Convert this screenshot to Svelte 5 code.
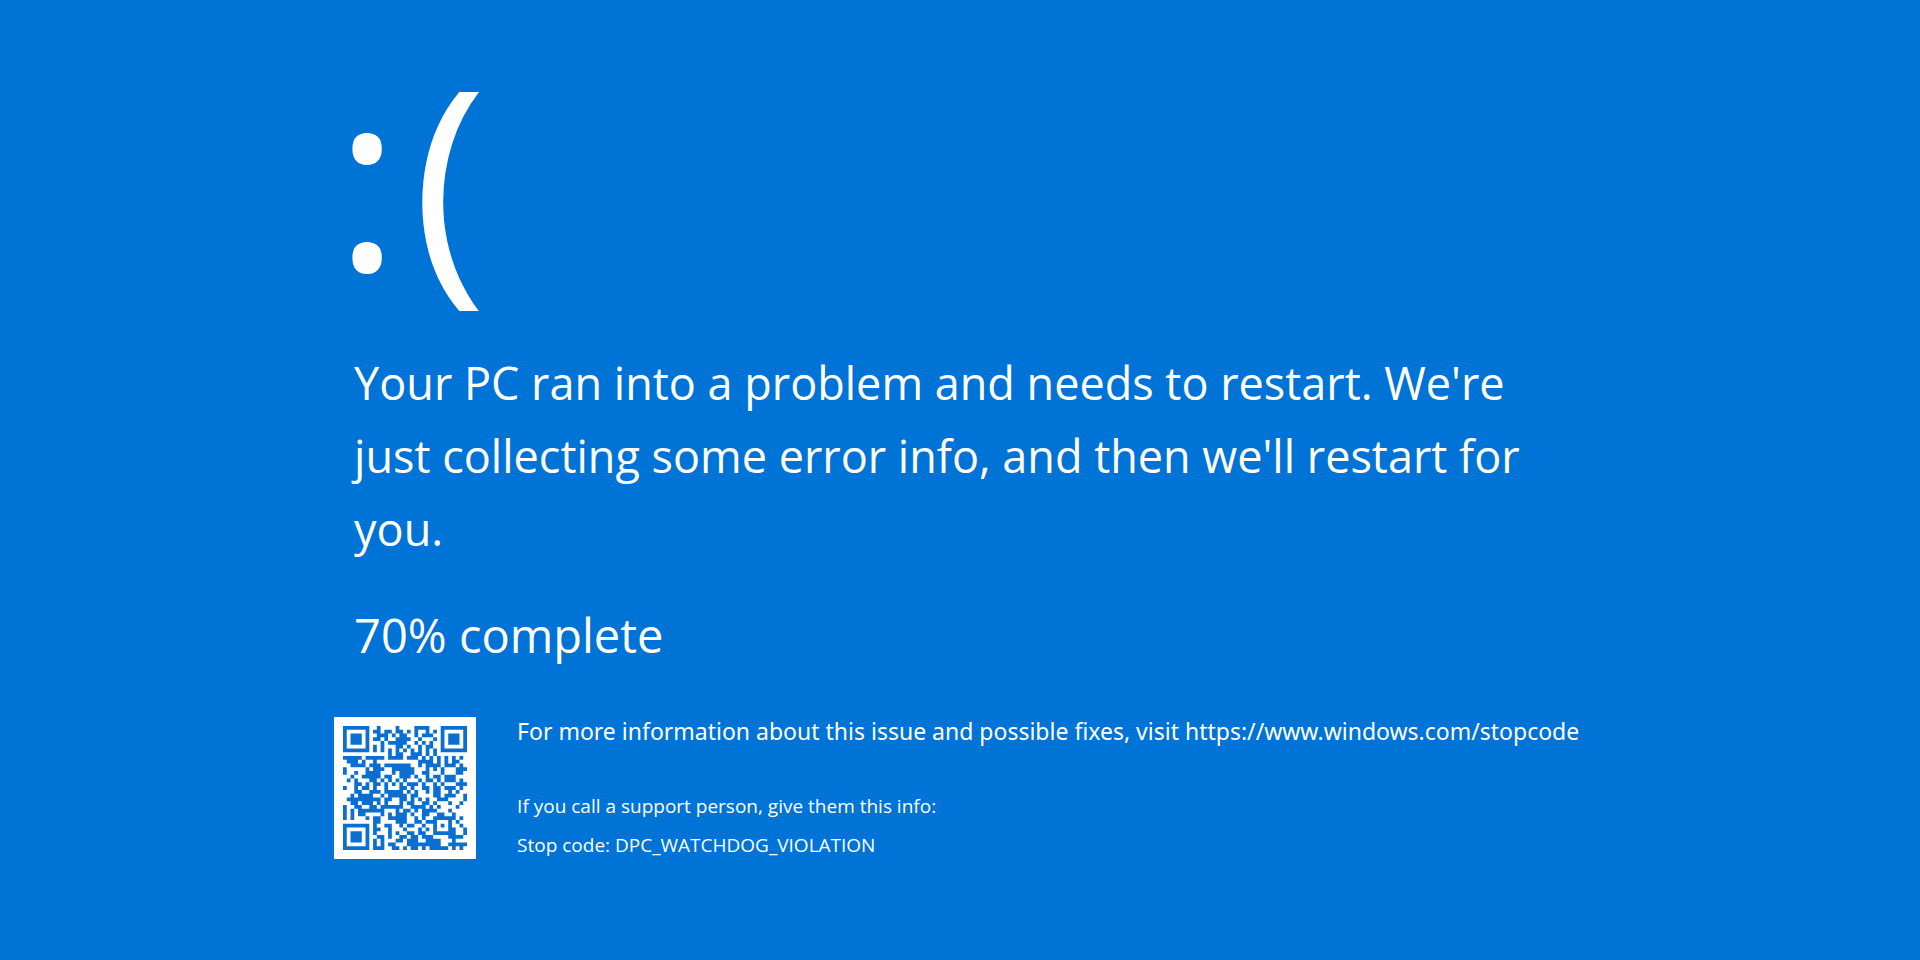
<script>
  const percent = 70;
  const stopCode = 'DPC_WATCHDOG_VIOLATION';

  const qr = [
    '#######..#....#....####...#######',
    '#.....#.##.##.##.#.#..#.#.#.....#',
    '#.###.#..###.#.##..#.###..#.###.#',
    '#.###.#.##.#..####..#...#.#.###.#',
    '#.###.#...#.#####..#.#.#..#.###.#',
    '#.....#.#.#...##.#..#.##..#.....#',
    '#######.#.#.#.#.#.#.#.#.#.#######',
    '............#.##..###.#.#........',
    '#####.#####.####.###.#.#.#.#.#.#.',
    '.###.#..#...........####.#.#.##..',
    '..####.###.#######..#.####.###.#.',
    '#.....#.###..######...#.#.#...###',
    '#..#..####...#.####..##...#...##.',
    '..#..#####.##..###.#..#.##.###...',
    '.#.#...##.#.#.#.#...#.##.#.###.#.',
    '...##.#.##.#.#.#.###.#..#.#...###',
    '#..#.##.#..#...##.#..##.##.###.#.',
    '...##..###.#####.#.#..#.##..#.#..',
    '..#.####..#.#####.##....##.###..#',
    '.#########.##..##.#.#.#..###....#',
    '..##.###.#.#...#.##..##.#...#..#.',
    '#..##..##.######..####.#.#....#..',
    '#.#.#######...#.##.#.####...#....',
    '#.#.##....#.#.###.#..##..##..#...',
    '#.#...#.##..#####..#.#..######.#.',
    '........##....###..##.###...#.#..',
    '#######.#..##..#.##..#..#.#.#..#.',
    '#.....#.##..#...#...#.#.#...##..#',
    '#.###.#.#...#.#..##.##..######..#',
    '#.###.#..##.#..##.##.###....####.',
    '#.###.#.#.#...##.###..####...#...',
    '#.....#.#.#.##...#########..#####',
    '#######.###..##.#.##.#.#####.#.#.',
  ];

  const qrPath = qr
    .flatMap((row, y) => [...row].map((cell, x) => (cell === '#' ? `M${x} ${y}h1v1h-1z` : '')))
    .join('');
</script>

<main class="screen">
  <h1 class="face"><span>:</span><span>(</span></h1>

  <div class="message">
    <p>
      Your PC ran into a problem and needs to restart. We're just collecting
      some error info, and then we'll restart for you.
    </p>
    <p class="progress">{percent}% complete</p>
  </div>

  <section class="details">
    <svg class="qr" viewBox="0 0 33 33" role="img" aria-label="QR code">
      <path d={qrPath} fill="currentColor" />
    </svg>
    <div class="info">
      <p class="more">
        For more information about this issue and possible fixes, visit
        <a href="https://www.windows.com/stopcode">https://www.windows.com/stopcode</a>
      </p>
      <div class="support">
        <p>If you call a support person, give them this info:</p>
        <p>Stop code: {stopCode}</p>
      </div>
    </div>
  </section>
</main>

<style>
  :global(body) {
    margin: 0;
    background: #0073d7;
  }
  .screen {
    box-sizing: border-box;
    min-height: 100vh;
    padding: 44px 16% 72px 17.4%;
    background: #0073d7;
    color: #fff;
    font-family: 'Open Sans', 'Noto Sans', sans-serif;
  }
  p,
  h1 {
    margin: 0;
  }
  .face {
    display: flex;
    gap: 12px;
    font-size: 252px;
    line-height: 260px;
    font-weight: 400;
  }
  .message {
    display: flex;
    flex-direction: column;
    gap: 34px;
    max-width: 1200px;
    margin-top: 42px;
    padding-left: 20px;
    font-size: 45px;
    line-height: 73px;
  }
  .progress {
    font-size: 47px;
  }
  .details {
    display: flex;
    gap: 41px;
    margin-top: 45px;
  }
  .qr {
    flex: none;
    box-sizing: border-box;
    width: 142px;
    height: 142px;
    padding: 9px;
    background: #fff;
    color: #0a6fd0;
  }
  .info {
    display: flex;
    flex-direction: column;
    gap: 42px;
  }
  .more {
    font-family: 'Noto Sans', 'Open Sans', sans-serif;
    font-size: 23px;
    line-height: 28px;
  }
  .more a {
    color: inherit;
    text-decoration: none;
  }
  .support {
    font-size: 19px;
    line-height: 39px;
  }
</style>
